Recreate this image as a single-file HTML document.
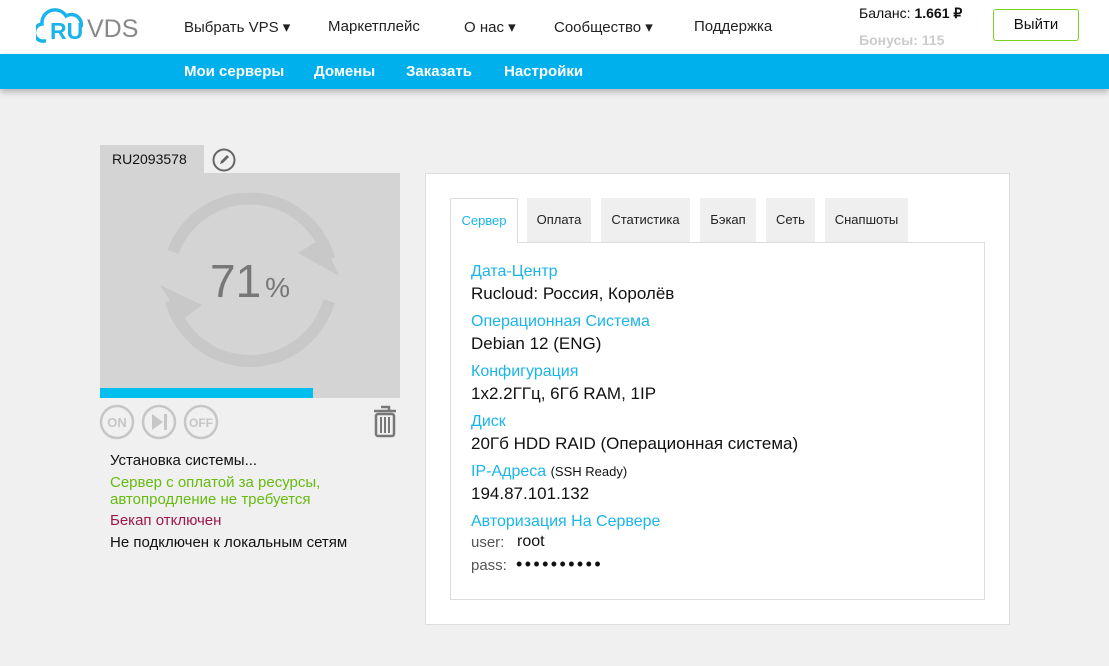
<!DOCTYPE html>
<html><head><meta charset="utf-8"><style>
*{margin:0;padding:0;box-sizing:border-box}
body{width:1109px;height:666px;background:#f0f0f0;font-family:"Liberation Sans",sans-serif;position:relative;overflow:hidden}
.a{position:absolute;white-space:nowrap}
.hdr{position:absolute;left:0;top:0;width:1109px;height:54px;background:#fff}
.bar{position:absolute;left:0;top:54px;width:1109px;height:35px;background:#00b0ec;box-shadow:0 3px 6px rgba(0,0,0,.25)}
.nav{font-size:15px;color:#222;top:18px}
.sub{font-size:15px;color:#fff;font-weight:bold;top:63px}
.tab{position:absolute;top:198px;height:44px;background:#efefef;font-size:13px;color:#222;text-align:center;line-height:44px}
.lbl{color:#1ab4ea;font-size:16px}
.val{color:#111;font-size:17px}
</style></head><body>
<div class="hdr"></div>
<svg class="a" style="left:36px;top:5px" width="50" height="38" viewBox="0 0 50 38"><path d="M10 36 H8 A8 8 0 0 1 6 19 A13 13 0 0 1 30 11 A10 10 0 0 1 45 22" fill="none" stroke="#1ab4ea" stroke-width="3.5"/></svg>
<div class="a" style="left:50px;top:18px;font-size:23px;font-weight:bold;color:#1ab4ea">RU</div>
<div class="a" style="left:87px;top:15px;font-size:25px;color:#888">VDS</div>
<div class="a nav" style="left:184px">Выбрать VPS ▾</div>
<div class="a nav" style="left:328px">Маркетплейс</div>
<div class="a nav" style="left:464px">О нас ▾</div>
<div class="a nav" style="left:554px">Сообщество ▾</div>
<div class="a nav" style="left:694px">Поддержка</div>
<div class="a" style="left:859px;top:5px;font-size:14px;color:#111">Баланс: <b>1.661 ₽</b></div>
<div class="a" style="left:859px;top:32px;font-size:14px;color:#ccc;font-weight:bold">Бонусы: 115</div>
<div class="a" style="left:993px;top:9px;width:86px;height:32px;border:1px solid #7ad21e;border-radius:3px;font-size:15px;text-align:center;line-height:30px;color:#111">Выйти</div>
<div class="bar"></div>
<div class="a sub" style="left:184px">Мои серверы</div>
<div class="a sub" style="left:314px">Домены</div>
<div class="a sub" style="left:406px">Заказать</div>
<div class="a sub" style="left:504px">Настройки</div>

<div class="a" style="left:100px;top:145px;width:104px;height:28px;background:#d4d4d4;font-size:14px;line-height:28px;padding-left:12px;color:#111">RU2093578</div>
<svg class="a" style="left:212px;top:148px" width="24" height="24"><circle cx="12" cy="12" r="10.5" fill="none" stroke="#666" stroke-width="2"/><path d="M8 16 L9 13 L15 7 L17 9 L11 15 Z" fill="#666"/></svg>
<div class="a" style="left:100px;top:173px;width:300px;height:225px;background:#d4d4d4"></div>
<svg class="a" style="left:100px;top:173px" width="300" height="225" viewBox="100 173 300 225"><g fill="none" stroke="#c8c8c8" stroke-width="12"><path d="M173 252 A82 82 0 0 1 329 259"/><path d="M329 301 A82 82 0 0 1 171 301"/></g><g fill="#c8c8c8"><path d="M298 253 L322 238 L339 276Z"/><path d="M160 285 L202 305 L182 320Z"/></g></svg>
<div class="a" style="left:210px;top:254px;font-size:46px;color:#777">71<span style="font-size:28px;margin-left:4px">%</span></div>
<div class="a" style="left:100px;top:388px;width:213px;height:10px;background:#00bfef"></div>
<svg class="a" style="left:99px;top:404px" width="122" height="36"><g fill="none" stroke="#c6c6c6" stroke-width="2.5"><circle cx="18" cy="18" r="16"/><circle cx="60" cy="18" r="16"/><circle cx="102" cy="18" r="16"/></g><text x="18" y="23" text-anchor="middle" font-size="13" font-weight="bold" fill="#c6c6c6" font-family="Liberation Sans">ON</text><text x="102" y="23" text-anchor="middle" font-size="12" font-weight="bold" fill="#c6c6c6" font-family="Liberation Sans">OFF</text><path d="M53 10 L64 18 L53 26Z M65 10 h3 v16 h-3Z" fill="#c6c6c6"/></svg>
<svg class="a" style="left:372px;top:405px" width="26" height="33"><path d="M9 2 h8 v3 M2 6 h22" stroke="#777" stroke-width="2.5" fill="none"/><rect x="4" y="9" width="18" height="22" rx="2" fill="none" stroke="#777" stroke-width="2.5"/><path d="M9 12 v16 M13 12 v16 M17 12 v16" stroke="#777" stroke-width="2"/></svg>
<div class="a" style="left:110px;top:452px;font-size:15px;color:#111">Установка системы...</div>
<div class="a" style="left:110px;top:474px;font-size:15px;color:#66bb11;line-height:17px">Сервер с оплатой за ресурсы,<br>автопродление не требуется</div>
<div class="a" style="left:110px;top:512px;font-size:15px;color:#a0164b">Бекап отключен</div>
<div class="a" style="left:110px;top:534px;font-size:15px;color:#111">Не подключен к локальным сетям</div>

<div class="a" style="left:425px;top:173px;width:585px;height:452px;background:#fff;border:1px solid #ddd"></div>
<div class="a" style="left:450px;top:242px;width:535px;height:358px;border:1px solid #ddd"></div>
<div class="tab" style="left:450px;width:68px;background:#fff;border:1px solid #ddd;border-bottom:none;height:45px;color:#1ab4ea">Сервер</div>
<div class="tab" style="left:527px;width:64px">Оплата</div>
<div class="tab" style="left:601px;width:89px">Статистика</div>
<div class="tab" style="left:700px;width:56px">Бэкап</div>
<div class="tab" style="left:766px;width:49px">Сеть</div>
<div class="tab" style="left:825px;width:83px">Снапшоты</div>
<div class="a lbl" style="left:471px;top:263px">Дата-Центр</div>
<div class="a val" style="left:471px;top:284px">Rucloud: Россия, Королёв</div>
<div class="a lbl" style="left:471px;top:313px">Операционная Система</div>
<div class="a val" style="left:471px;top:334px">Debian 12 (ENG)</div>
<div class="a lbl" style="left:471px;top:363px">Конфигурация</div>
<div class="a val" style="left:471px;top:384px">1x2.2ГГц, 6Гб RAM, 1IP</div>
<div class="a lbl" style="left:471px;top:413px">Диск</div>
<div class="a val" style="left:471px;top:434px">20Гб HDD RAID (Операционная система)</div>
<div class="a lbl" style="left:471px;top:463px">IP-Адреса <span style="font-size:13px;color:#111">(SSH Ready)</span></div>
<div class="a val" style="left:471px;top:484px">194.87.101.132</div>
<div class="a lbl" style="left:471px;top:513px">Авторизация На Сервере</div>
<div class="a" style="left:471px;top:534px;font-size:15px;color:#555">user:</div>
<div class="a val" style="left:517px;top:533px;font-size:16px">root</div>
<div class="a" style="left:471px;top:557px;font-size:15px;color:#555">pass:</div>
<div class="a val" style="left:516px;top:554px;font-size:18px;letter-spacing:2.4px">••••••••••</div>
</body></html>
